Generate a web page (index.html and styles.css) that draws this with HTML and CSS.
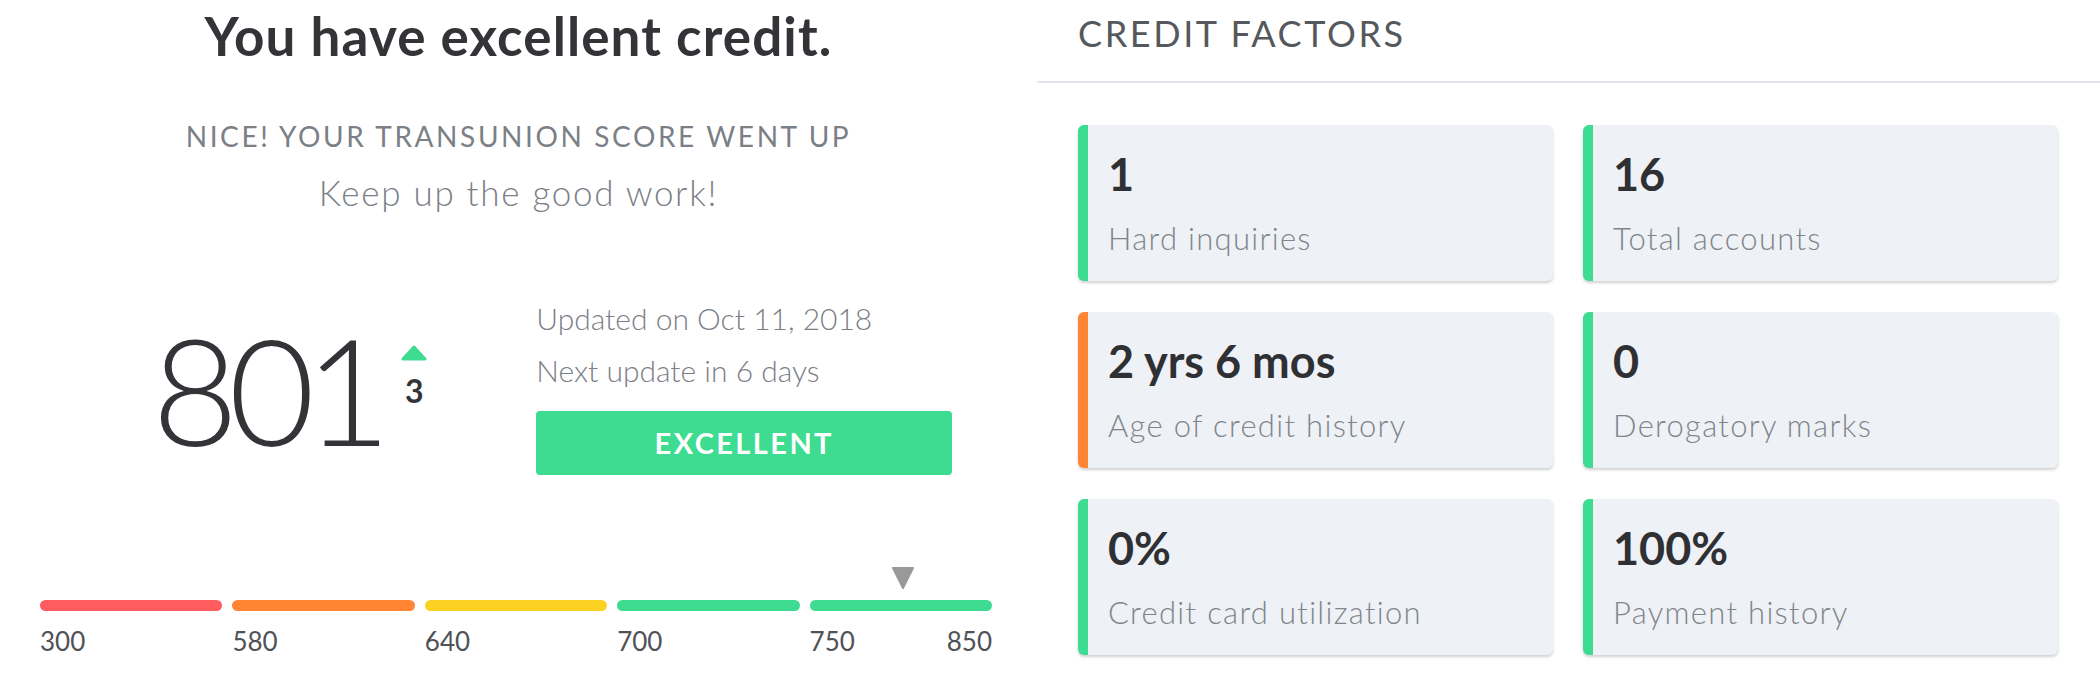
FILE: index.html
```html
<!DOCTYPE html>
<html lang="en">
<head>
  <meta charset="UTF-8" />
  <meta name="viewport" content="width=device-width, initial-scale=1.0">
  <title>Credit Score</title>
  <link rel="stylesheet" href="styles.css">
</head>
<body>
  <div class="page">
    <section class="score-panel">
      <h1 class="headline">You have excellent credit.</h1>
      <div class="subhead">NICE! YOUR TRANSUNION SCORE WENT UP</div>
      <div class="cheer">Keep up the good work!</div>

      <div class="score-row">
        <div class="score">801</div>
        <div class="delta">
          <svg class="delta-arrow" width="26" height="16" viewBox="0 0 26 16">
            <polygon points="13,2 24,14 2,14" fill="#3ddc91" stroke="#3ddc91" stroke-width="3" stroke-linejoin="round" />
          </svg>
          <div class="delta-value">3</div>
        </div>
        <div class="score-info">
          <div class="info-line">Updated on Oct 11, 2018</div>
          <div class="info-line">Next update in 6 days</div>
          <div class="rating">EXCELLENT</div>
        </div>
      </div>

      <div class="scale">
        <div class="range">
          <div class="bar red"></div>
          <div class="range-labels"><span>300</span></div>
        </div>
        <div class="range">
          <div class="bar orange"></div>
          <div class="range-labels"><span>580</span></div>
        </div>
        <div class="range">
          <div class="bar yellow"></div>
          <div class="range-labels"><span>640</span></div>
        </div>
        <div class="range">
          <div class="bar green"></div>
          <div class="range-labels"><span>700</span></div>
        </div>
        <div class="range">
          <svg class="marker" style="left: 51%" width="24" height="24" viewBox="0 0 24 24">
            <polygon points="2,2 22,2 12,22" fill="#999999" stroke="#999999" stroke-width="2" stroke-linejoin="round" />
          </svg>
          <div class="bar green"></div>
          <div class="range-labels"><span>750</span><span>850</span></div>
        </div>
      </div>
    </section>

    <section class="factors-panel">
      <h2 class="factors-title">CREDIT FACTORS</h2>
      <div class="factors">
        <div class="factor good">
          <div class="factor-value">1</div>
          <div class="factor-label">Hard inquiries</div>
        </div>
        <div class="factor good">
          <div class="factor-value">16</div>
          <div class="factor-label">Total accounts</div>
        </div>
        <div class="factor fair">
          <div class="factor-value">2 yrs 6 mos</div>
          <div class="factor-label">Age of credit history</div>
        </div>
        <div class="factor good">
          <div class="factor-value">0</div>
          <div class="factor-label">Derogatory marks</div>
        </div>
        <div class="factor good">
          <div class="factor-value">0%</div>
          <div class="factor-label">Credit card utilization</div>
        </div>
        <div class="factor good">
          <div class="factor-value">100%</div>
          <div class="factor-label">Payment history</div>
        </div>
      </div>
    </section>
  </div>
</body>
</html>
```

FILE: styles.css
```css
body {
  margin: 0;
  background: #ffffff;
  font-family: 'Lato', 'Noto Sans', sans-serif;
  color: #333438;
}

.page {
  display: flex;
  width: 2100px;
  height: 694px;
  overflow: hidden;
}

/* Left: score */
.score-panel {
  width: 1037px;
  flex-shrink: 0;
}

.headline {
  margin: 9px 0 0;
  font-size: 53px;
  line-height: 53px;
  font-weight: 700;
  letter-spacing: 1.1px;
  text-align: center;
  color: #333438;
}

.subhead {
  margin-top: 60px;
  font-size: 28px;
  line-height: 28px;
  letter-spacing: 2.6px;
  text-align: center;
  color: #7b8087;
}

.cheer {
  margin-top: 25px;
  font-size: 35px;
  line-height: 35px;
  font-weight: 300;
  letter-spacing: 1.7px;
  text-align: center;
  color: #7b8087;
}

.score-row {
  display: flex;
  align-items: flex-start;
  margin-top: 82px;
  padding-left: 152px;
}

.score {
  margin-top: 22px;
  font-size: 149px;
  line-height: 149px;
  font-weight: 300;
  letter-spacing: -10px;
  color: #333438;
}

.delta {
  display: flex;
  flex-direction: column;
  align-items: center;
  width: 30px;
  margin: 53px 0 0 18px;
}

.delta-value {
  margin-top: 14px;
  font-size: 32px;
  line-height: 32px;
  font-weight: 700;
  color: #333438;
}

.score-info {
  margin-left: 107px;
  width: 416px;
}

.info-line {
  font-size: 30px;
  line-height: 52px;
  font-weight: 300;
  color: #7b8087;
}

.rating {
  margin-top: 15px;
  height: 64px;
  line-height: 64px;
  background: #3ddc91;
  border-radius: 4px;
  color: #ffffff;
  font-size: 29px;
  font-weight: 700;
  letter-spacing: 2.4px;
  text-align: center;
}

.scale {
  display: grid;
  grid-template-columns: repeat(5, 1fr);
  gap: 10px;
  margin-top: 125px;
  padding: 0 45px 0 40px;
}

.range {
  position: relative;
}

.bar {
  height: 11px;
  border-radius: 6px;
}

.bar.red { background: #ff5c60; }
.bar.orange { background: #ff8535; }
.bar.yellow { background: #fdd122; }
.bar.green { background: #3ddc91; }

.marker {
  position: absolute;
  top: -34px;
  margin-left: -12px;
}

.range-labels {
  display: flex;
  justify-content: space-between;
  margin-top: 17px;
  font-size: 26px;
  line-height: 26px;
  color: #4f5257;
}

/* Right: credit factors */
.factors-panel {
  flex: 1;
}

.factors-title {
  margin: 15px 0 0;
  padding: 0 0 30px 41px;
  border-bottom: 2px solid #e1e6ed;
  font-size: 36px;
  line-height: 36px;
  font-weight: 400;
  letter-spacing: 2.6px;
  color: #55585d;
}

.factors {
  display: grid;
  grid-template-columns: 1fr 1fr;
  column-gap: 30px;
  row-gap: 31px;
  margin-top: 42px;
  padding: 0 42px 0 41px;
}

.factor {
  padding: 27px 20px 27px 20px;
  background: #eef1f5;
  border-left: 10px solid #3ddc91;
  border-radius: 6px;
  box-shadow: 0 2px 3px rgba(0, 0, 0, 0.18);
}

.factor.fair {
  border-left-color: #ff8535;
}

.factor-value {
  font-size: 45px;
  line-height: 45px;
  font-weight: 700;
  color: #2f3034;
}

.factor-label {
  margin-top: 26px;
  font-size: 31px;
  line-height: 31px;
  font-weight: 300;
  letter-spacing: 1.3px;
  color: #80858b;
}
```
